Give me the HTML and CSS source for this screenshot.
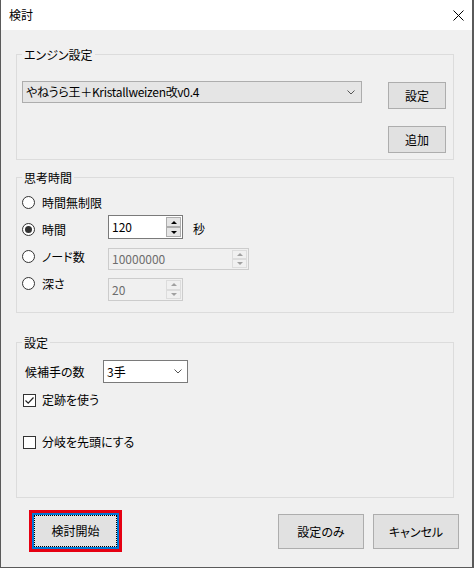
FILE: index.html
```html
<!DOCTYPE html>
<html lang="ja">
<head>
<meta charset="utf-8">
<title>検討</title>
<link rel="stylesheet" href="styles.css">
</head>
<body>
<div class="window">
  <div class="titlebar">
    <span class="title">検討</span>
    <svg class="close" width="11" height="11" viewBox="0 0 11 11"><path d="M0.5 0.5L10.5 10.5M10.5 0.5L0.5 10.5" stroke="#000" stroke-width="1" fill="none"/></svg>
  </div>
  <div class="client">
    <fieldset class="group g-engine">
      <legend>エンジン設定</legend>
      <div class="engine-row">
        <div class="combo combo-ro engine-combo">
          <span class="combo-text">やねうら王＋Kristallweizen改v0.4</span>
          <svg class="chev" width="8" height="5" viewBox="0 0 8 5"><path d="M0.5 0.5L4 4L7.5 0.5" fill="none" stroke="#555" stroke-width="1"/></svg>
        </div>
        <button class="btn btn-side btn-set">設定</button>
      </div>
      <div class="engine-row2">
        <button class="btn btn-side">追加</button>
      </div>
    </fieldset>

    <fieldset class="group g-time">
      <legend>思考時間</legend>
      <div class="time-grid">
        <label class="radio row1"><span class="radio-dot"></span>時間無制限</label>

        <label class="radio row2"><span class="radio-dot checked"></span>時間</label>
        <div class="spin spin-time">
          <span class="spin-text">120</span>
          <span class="spin-btns"><span class="spin-b"><span class="tri-up"></span></span><span class="spin-b"><span class="tri-down"></span></span></span>
        </div>
        <span class="unit">秒</span>

        <label class="radio row3"><span class="radio-dot"></span>ノード数</label>
        <div class="spin spin-node disabled">
          <span class="spin-text">10000000</span>
          <span class="spin-btns"><span class="spin-b"><span class="tri-up"></span></span><span class="spin-b"><span class="tri-down"></span></span></span>
        </div>

        <label class="radio row4"><span class="radio-dot"></span>深さ</label>
        <div class="spin spin-depth disabled">
          <span class="spin-text">20</span>
          <span class="spin-btns"><span class="spin-b"><span class="tri-up"></span></span><span class="spin-b"><span class="tri-down"></span></span></span>
        </div>
      </div>
    </fieldset>

    <fieldset class="group g-set">
      <legend>設定</legend>
      <div class="cand-row">
        <span class="cand-label">候補手の数</span>
        <div class="combo combo-w cand-combo">
          <span class="combo-text">3手</span>
          <svg class="chev" width="8" height="5" viewBox="0 0 8 5"><path d="M0.5 0.5L4 4L7.5 0.5" fill="none" stroke="#555" stroke-width="1"/></svg>
        </div>
      </div>
      <label class="check c1"><span class="check-box"><svg width="11" height="11" viewBox="0 0 11 11"><path d="M1.5 5.5L4.2 8.2L9.5 2.5" fill="none" stroke="#222" stroke-width="1.2"/></svg></span>定跡を使う</label>
      <label class="check c2"><span class="check-box"></span>分岐を先頭にする</label>
    </fieldset>

    <div class="actions">
      <button class="btn btn-main highlight"><span class="focus-rect">検討開始</span></button>
      <button class="btn btn-act btn-only">設定のみ</button>
      <button class="btn btn-act">キャンセル</button>
    </div>
  </div>
</div>
</body>
</html>
```

FILE: styles.css
```css
* {
  box-sizing: border-box;
}

html, body {
  margin: 0;
  padding: 0;
}

body {
  width: 474px;
  height: 568px;
  background: #f0f0f0;
  font-family: "Noto Sans CJK JP", "Noto Sans", sans-serif;
  font-size: 12px;
  font-weight: 400;
  color: #000;
  font-feature-settings: "palt";
}

.window {
  width: 474px;
  height: 568px;
  border-left: 1px solid #5a5a5a;
  border-right: 2px solid #5a5a5a;
  border-bottom: 1px solid #5a5a5a;
  background: #f0f0f0;
  display: flex;
  flex-direction: column;
}

.titlebar {
  height: 30px;
  flex: none;
  background: #fff;
  display: flex;
  align-items: center;
  justify-content: space-between;
  padding: 0 8px 0 8px;
}

.title {
  font-size: 12px;
  line-height: 16px;
}

.close {
  display: block;
}

.client {
  flex: 1;
  display: flex;
  flex-direction: column;
}

.group {
  margin: 0 18px 0 15px;
  border: 1px solid #dcdcdc;
  padding: 0 7px 6px 5px;
  min-width: 0;
}

.group legend {
  padding: 0 2px;
  margin: 0;
  font-size: 12px;
  line-height: 17px;
}

.g-engine {
  margin-top: 16px;
  padding-top: 18px;
  padding-bottom: 6px;
}

.g-time {
  margin-top: 9px;
  padding-top: 3px;
  padding-bottom: 15px;
}

.g-set {
  margin-top: 21px;
  padding-top: 9px;
  padding-bottom: 45px;
}

/* buttons */
button {
  font: inherit;
  color: inherit;
  margin: 0;
  padding: 0;
}

.btn {
  background: #e1e1e1;
  border: 1px solid #adadad;
  display: flex;
  align-items: center;
  justify-content: center;
  line-height: 16px;
}

.btn-side {
  width: 58px;
  height: 27px;
}

/* engine */
.engine-row {
  display: flex;
  align-items: flex-start;
  justify-content: space-between;
}

.btn-set {
  margin-top: 1px;
}

.engine-row2 {
  display: flex;
  justify-content: flex-end;
  margin-top: 17px;
}

.combo {
  display: flex;
  align-items: center;
  justify-content: space-between;
  border: 1px solid #adadad;
}

.combo-text {
  line-height: 16px;
  white-space: nowrap;
}

.combo-ro {
  background: #e5e5e5;
}

.engine-combo {
  width: 340px;
  height: 22px;
  padding: 0 6px 0 3px;
}

.engine-combo .combo-text {
  letter-spacing: -0.3px;
}

.combo-w {
  background: #fff;
  border-color: #7a7a7a;
}

.chev {
  display: block;
  flex: none;
}

/* time grid */
.time-grid {
  display: grid;
  grid-template-columns: 86px 75px 1fr;
  grid-template-rows: repeat(4, 27px);
}

.radio {
  display: flex;
  align-items: center;
  white-space: nowrap;
  grid-column: 1;
  line-height: 16px;
}

.row1 { grid-row: 1; grid-column: 1 / 4; }
.row2 { grid-row: 2; }
.row3 { grid-row: 3; }
.row4 { grid-row: 4; }

.radio-dot {
  width: 13px;
  height: 13px;
  border: 1px solid #333;
  border-radius: 50%;
  background: #fff;
  margin-right: 7px;
  display: flex;
  align-items: center;
  justify-content: center;
  flex: none;
}

.radio-dot.checked::before {
  content: "";
  width: 7px;
  height: 7px;
  border-radius: 50%;
  background: #333;
}

.spin {
  display: flex;
  align-items: stretch;
  border: 1px solid #7a7a7a;
  background: #fff;
  align-self: start;
  justify-self: start;
  grid-column: 2;
}

.spin-text {
  flex: 1;
  padding-left: 3px;
  line-height: 16px;
  display: flex;
  align-items: center;
}

.spin-btns {
  display: flex;
  flex-direction: column;
  width: 16px;
  padding: 1px 1px 1px 0;
}

.spin-b {
  flex: 1;
  border: 1px solid #adadad;
  background: #e5e5e5;
  display: flex;
  align-items: center;
  justify-content: center;
}

.tri-up {
  width: 0;
  height: 0;
  border-left: 3px solid transparent;
  border-right: 3px solid transparent;
  border-bottom: 3px solid #000;
}

.tri-down {
  width: 0;
  height: 0;
  border-left: 3px solid transparent;
  border-right: 3px solid transparent;
  border-top: 3px solid #000;
}

.spin-time {
  grid-row: 2;
  width: 75px;
  height: 24px;
  margin-top: -1px;
}

.unit {
  grid-row: 2;
  grid-column: 3;
  align-self: center;
  margin-left: 10px;
  margin-top: -2px;
  line-height: 16px;
}

.spin-node {
  grid-row: 3;
  grid-column: 2 / 4;
  width: 141px;
  height: 22px;
  margin-top: 5px;
}

.spin-depth {
  grid-row: 4;
  width: 75px;
  height: 23px;
  margin-top: 8px;
}

.spin.disabled {
  border-color: #cccccc;
  background: #f0f0f0;
  color: #6d6d6d;
}

.spin.disabled .spin-b {
  border-color: #dcdcdc;
  background: #f0f0f0;
}

.spin.disabled .tri-up {
  border-bottom-color: #a0a0a0;
}

.spin.disabled .tri-down {
  border-top-color: #a0a0a0;
}

/* settings */
.cand-row {
  display: flex;
  align-items: center;
}

.cand-label {
  width: 78px;
  margin-left: 3px;
  line-height: 16px;
}

.cand-combo {
  width: 85px;
  height: 23px;
  padding: 0 5px 0 3px;
}

.check {
  display: flex;
  align-items: center;
  height: 20px;
  line-height: 16px;
}

.c1 {
  margin-top: 7px;
}

.c2 {
  margin-top: 22px;
}

.check-box {
  width: 13px;
  height: 13px;
  border: 1px solid #333;
  background: #fff;
  margin-left: 1px;
  margin-right: 6px;
  display: flex;
  align-items: center;
  justify-content: center;
  flex: none;
}

.check-box svg {
  display: block;
}

/* actions */
.actions {
  display: flex;
  align-items: flex-start;
  margin-top: 15px;
  padding: 0 13px 0 31px;
}

.btn-main {
  width: 87px;
  height: 36px;
  border: 2px solid #0078d7;
  padding: 0;
  align-items: stretch;
}

.highlight {
  outline: 3px solid #e60012;
  outline-offset: 0;
}

.focus-rect {
  flex: 1;
  border: 1px dotted #000;
  display: flex;
  align-items: center;
  justify-content: center;
}

.btn-act {
  width: 86px;
  height: 35px;
  margin-top: 1px;
}

.btn-only {
  margin-left: auto;
  margin-right: 9px;
}
```
